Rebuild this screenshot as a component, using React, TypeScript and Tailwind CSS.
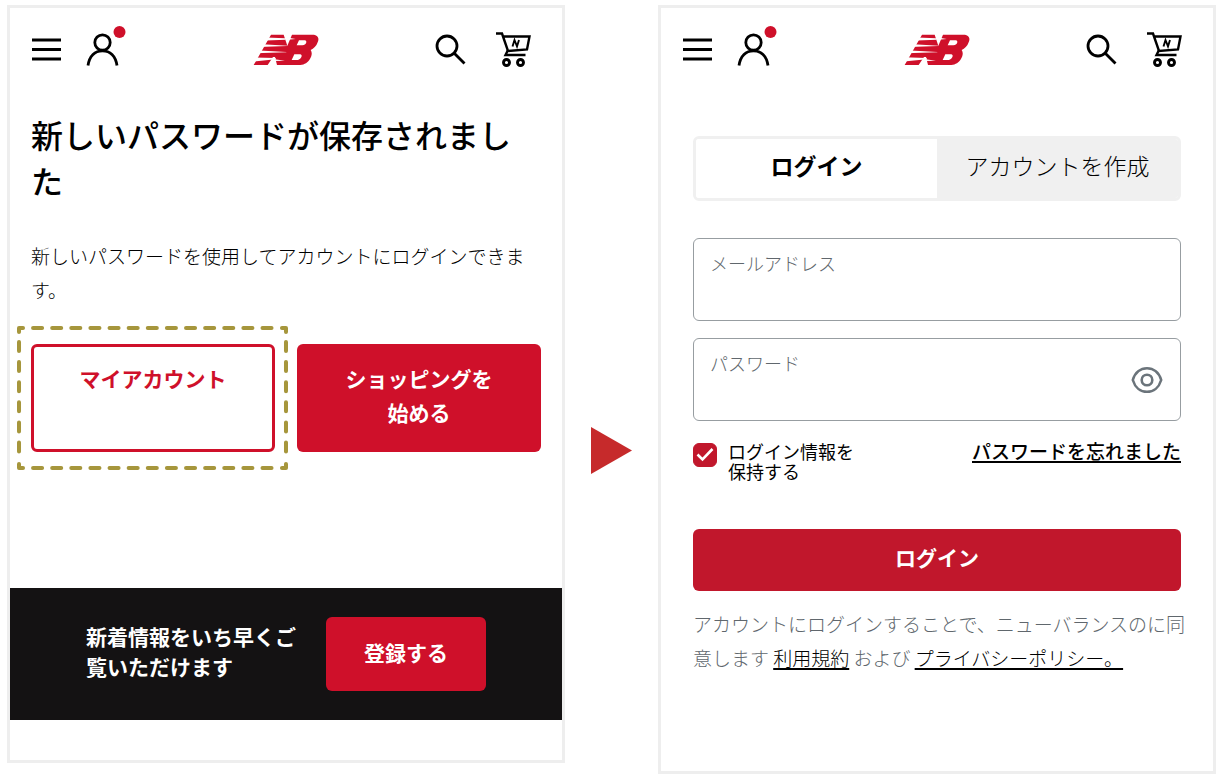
import { useState } from 'react'

const iconButton = 'flex items-center justify-center cursor-pointer'
const formField =
  'block w-full h-[83px] rounded-md border border-[#979da1] bg-white px-4 pt-8 text-[18px] text-black'
const fieldLabel = 'absolute left-[17px] top-[11px] text-[18px] leading-7 font-light text-[#60676d]'

function Logo() {
  return (
    <svg width="66" height="33" viewBox="40 36 198 99" aria-hidden="true">
      <path
        fill="#cf102a"
        fillRule="evenodd"
        d="M94 41H132L143 74L157 41H218C234 41 240 51 234 64C230 76 222 83 213 87C219 96 216 107 209 117C201 128 191 132 177 132H112L106 108H100L84 132H42ZM178 58L171 73H188C195 73 200 68 200 63C200 59 197 58 192 58ZM164 100L156 117H171C179 117 186 110 186 104C186 101 183 100 178 100Z"
      />
      <g fill="#fff">
        <path d="M60 49L136 52L138 56L60 59Z" />
        <path d="M56 69L144 74L144 75L56 78Z" />
        <path d="M46 88L140 93L140 94L46 97Z" />
        <path d="M36 109L108 111L108 115L36 122Z" />
        <path d="M146 50L168 54L144 56Z" />
        <path d="M100 114L136 119L100 120Z" />
      </g>
    </svg>
  )
}

function Header() {
  return (
    <header className="grid h-[84px] grid-cols-[1fr_auto_1fr] items-center px-[22px] pb-0.5">
      <div className="flex items-center gap-6">
        <button type="button" aria-label="メニュー" className={iconButton}>
          <svg width="30" height="24" viewBox="0 0 30 24" stroke="#000" strokeWidth="3">
            <path d="M0 3H29M0 12.500H29M0 22H29" />
          </svg>
        </button>
        <button type="button" aria-label="アカウント" className={`${iconButton} pb-1.5`}>
          <svg width="40" height="44" viewBox="0 0 40 44" fill="none">
            <circle cx="16.500" cy="18.500" r="7.700" stroke="#000" strokeWidth="2.800" />
            <path d="M2 41.500C3.500 32 9 26.800 16.500 26.800S29.500 32 31 41.500" stroke="#000" strokeWidth="2.800" />
            <circle cx="33.500" cy="8" r="6" fill="#cf102a" />
          </svg>
        </button>
      </div>
      <a href="#" aria-label="New Balance">
        <Logo />
      </a>
      <div className="flex items-center justify-end gap-[29px] pr-2">
        <button type="button" aria-label="検索" className={iconButton}>
          <svg width="32" height="32" viewBox="0 0 32 32" fill="none" stroke="#000" strokeWidth="2.800">
            <circle cx="12" cy="13" r="10" />
            <path d="M19 20L29.500 30.500" />
          </svg>
        </button>
        <button type="button" aria-label="カート" className={iconButton}>
          <svg width="36" height="36" viewBox="0 0 36 36" fill="none" stroke="#000" strokeWidth="2.400">
            <path d="M0 2.500H6L12 20L31 18.500L33.500 5.500H7" />
            <path d="M12 19L9.500 24H29.500" />
            <circle cx="10.500" cy="31.500" r="3" strokeWidth="2.900" />
            <circle cx="24.500" cy="31.500" r="3" strokeWidth="2.900" />
            <path d="M16.500 15.500L18.500 9L21 15.300L23 9" strokeWidth="1.900" />
          </svg>
        </button>
      </div>
    </header>
  )
}

function HighlightFrame() {
  return (
    <svg
      width="270"
      height="144"
      viewBox="0 0 270 144"
      fill="none"
      stroke="#a6963c"
      strokeWidth="4"
      strokeLinecap="round"
      strokeLinejoin="round"
      className="pointer-events-none absolute -left-[14px] -top-[18px] h-[calc(100%+36px)] w-[calc(100%+27px)]"
      preserveAspectRatio="none"
      aria-hidden="true"
    >
      <path d="M2 6V2H6M264 2H268V6M268 138V142H264M6 142H2V138" />
      <path d="M16 2H260M16 142H260" strokeDasharray="9 10.050" />
      <path d="M2 16V134M268 16V134" strokeDasharray="9 11.100" />
    </svg>
  )
}

function PasswordSaved() {
  return (
    <section className="min-w-0 flex-1 border-[3px] border-[#eee] bg-white pb-10">
      <Header />
      <div className="px-[21px] pt-[19px]">
        <h1 className="text-[32px] leading-[46px] font-medium">新しいパスワードが保存されました</h1>
        <p className="mt-9 text-[19px] leading-[34px] font-light">
          新しいパスワードを使用してアカウントにログインできます。
        </p>
        <div className="mt-[37px] flex gap-[22px] text-[21px] leading-[34px] font-bold">
          <div className="relative flex flex-1">
            <button
              type="button"
              className="flex flex-1 cursor-pointer justify-center rounded-md border-[3px] border-[#cf102a] pt-3.5 text-[#cf102a]"
            >
              マイアカウント
            </button>
            <HighlightFrame />
          </div>
          <button
            type="button"
            className="flex-1 cursor-pointer rounded-md bg-[#cf102a] pt-[17px] pb-[23px] text-white"
          >
            ショッピングを
            <br />
            始める
          </button>
        </div>
      </div>
      <div className="mt-[136px] flex items-center justify-center gap-4 bg-[#141213] py-[29px] text-[21px] font-bold text-white">
        <p className="w-56 pb-1.5 leading-[30px]">新着情報をいち早くご覧いただけます</p>
        <button type="button" className="h-[74px] w-40 cursor-pointer rounded-md bg-[#cf102a] pb-0.5">
          登録する
        </button>
      </div>
    </section>
  )
}

function LoginForm() {
  const [tab, setTab] = useState<'login' | 'create'>('login')
  const [showPassword, setShowPassword] = useState(false)
  const [remember, setRemember] = useState(true)

  const tabBase = 'h-[59px] flex-1 cursor-pointer pb-1.5'
  const tabActive = 'bg-white font-bold'
  const tabIdle = 'bg-[#f0f0f0] font-light'

  return (
    <section className="min-w-0 flex-1 border-[3px] border-[#eee] bg-white pb-24">
      <Header />
      <div className="px-8 pt-11">
        <div role="tablist" className="flex overflow-hidden rounded-md border-[3px] border-[#f0f0f0] text-[23px]">
          <button
            type="button"
            role="tab"
            aria-selected={tab === 'login'}
            onClick={() => setTab('login')}
            className={`${tabBase} ${tab === 'login' ? tabActive : tabIdle}`}
          >
            ログイン
          </button>
          <button
            type="button"
            role="tab"
            aria-selected={tab === 'create'}
            onClick={() => setTab('create')}
            className={`${tabBase} ${tab === 'create' ? tabActive : tabIdle}`}
          >
            アカウントを作成
          </button>
        </div>

        <form onSubmit={e => e.preventDefault()}>
          <div className="relative mt-[37px]">
            <label htmlFor="email" className={fieldLabel}>メールアドレス</label>
            <input id="email" type="email" className={formField} />
          </div>
          <div className="relative mt-[17px]">
            <label htmlFor="password" className={fieldLabel}>パスワード</label>
            <input id="password" type={showPassword ? 'text' : 'password'} className={formField} />
            <button
              type="button"
              aria-label="パスワードを表示"
              aria-pressed={showPassword}
              onClick={() => setShowPassword(!showPassword)}
              className="absolute right-[18px] top-7 cursor-pointer"
            >
              <svg width="32" height="28" viewBox="0 0 32 28" fill="none" stroke="#6b747b" strokeWidth="2.600">
                <path d="M1.800 14C4 6.500 9.500 2.200 16 2.200S28 6.500 30.200 14C28 21.500 22.500 25.800 16 25.800S4 21.500 1.800 14Z" />
                <circle cx="16" cy="14" r="5.300" />
              </svg>
            </button>
          </div>

          <div className="mt-5 flex items-start justify-between">
            <label className="flex cursor-pointer gap-[11px] text-[18px] leading-5">
              <span className="relative mt-0.5 flex h-6 w-6">
                <input
                  type="checkbox"
                  checked={remember}
                  onChange={e => setRemember(e.target.checked)}
                  className="h-6 w-6 cursor-pointer appearance-none rounded-md border border-[#c1172c] checked:bg-[#c1172c]"
                />
                {remember && (
                  <svg
                    width="24"
                    height="24"
                    viewBox="0 0 24 24"
                    fill="none"
                    stroke="#fff"
                    strokeWidth="2.600"
                    className="pointer-events-none absolute inset-0"
                  >
                    <path d="M4.500 11.500L9.500 16.500L19.500 6" />
                  </svg>
                )}
              </span>
              <span>
                ログイン情報を
                <br />
                保持する
              </span>
            </label>
            <a href="#" className="border-b-2 border-black text-[19px] leading-5 font-medium">
              パスワードを忘れました
            </a>
          </div>

          <button
            type="submit"
            className="mt-12 h-[62px] w-full cursor-pointer rounded-md bg-[#c1172c] pb-1 text-[21px] font-bold text-white"
          >
            ログイン
          </button>
        </form>

        <p className="-mr-2 mt-4 text-[19px] leading-[34px] font-light text-[#60676d]">
          アカウントにログインすることで、ニューバランスのに同意します{' '}
          <a href="#" className="text-black underline decoration-2 underline-offset-2">利用規約</a>
          {' '}および{' '}
          <a href="#" className="text-black underline decoration-2 underline-offset-2">プライバシーポリシー。</a>
        </p>
      </div>
    </section>
  )
}

export default function App() {
  return (
    <main
      lang="ja"
      className="flex items-start bg-white px-[7px] pt-[5px] font-['Noto_Sans_CJK_JP',sans-serif] text-black"
    >
      <PasswordSaved />
      <div className="flex w-[93px] shrink-0 justify-center self-stretch pt-[422px]">
        <svg width="41" height="47" viewBox="0 0 41 47" fill="#c62a2b" aria-hidden="true">
          <path d="M0 0L41 23.500L0 47Z" />
        </svg>
      </div>
      <LoginForm />
    </main>
  )
}
